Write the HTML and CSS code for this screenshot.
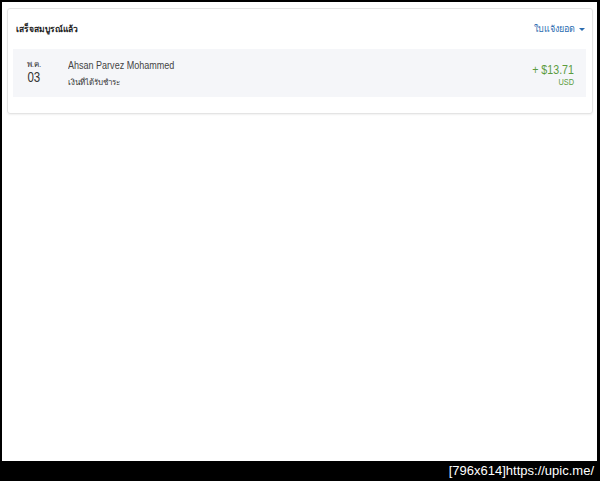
FILE: index.html
```html
<!DOCTYPE html>
<html lang="th">
<head>
  <meta charset="UTF-8">
  <title>Activity</title>
  <link rel="stylesheet" href="styles.css">
</head>
<body>
  <div class="screen">
    <div class="card">
      <div class="card-head">
        <span class="title">เสร็จสมบูรณ์แล้ว</span>
        <span class="statement">ใบแจ้งยอด <span class="caret"></span></span>
      </div>
      <div class="txn">
        <div class="date">
          <span class="month">พ.ค.</span>
          <span class="day narrow">03</span>
        </div>
        <div class="info">
          <span class="name narrow">Ahsan Parvez Mohammed</span>
          <span class="type">เงินที่ได้รับชำระ</span>
        </div>
        <div class="amount">
          <span class="value narrow">+ $13.71</span>
          <span class="currency narrow">USD</span>
        </div>
      </div>
    </div>
  </div>
  <div class="caption">[796x614]https://upic.me/</div>
</body>
</html>
```

FILE: styles.css
```css
body {
  margin: 0;
  background-color: #000;
  font-family: "Liberation Sans", Arial, sans-serif;
  height: 481px;
  overflow: hidden;
}

/* the screenshot's sans is a condensed face */
.narrow {
  display: inline-block;
  transform: scaleX(0.82);
}

.screen {
  background-color: #fff;
  margin: 2px 3px 0 2px;
  height: 459px;
  padding: 6px 4px 0 5px;
  box-sizing: border-box;
}

.card {
  border: 1px solid #e4e4e4;
  border-radius: 3px;
  box-shadow: 0 1px 2px rgba(0, 0, 0, 0.06);
  padding: 0 6px 16px 5px;
}

.card-head {
  display: flex;
  justify-content: space-between;
  align-items: center;
  height: 40px;
  padding: 0 1px 0 3px;
}

.title {
  font-size: 8.5px;
  font-weight: bold;
  color: #222;
}

.statement {
  font-size: 9px;
  color: #2b6cb0;
  display: flex;
  align-items: center;
  gap: 4px;
}

.caret {
  width: 0;
  height: 0;
  border-left: 3px solid transparent;
  border-right: 3px solid transparent;
  border-top: 3px solid #2b6cb0;
}

.txn {
  background-color: #f5f6f9;
  display: flex;
  align-items: center;
  height: 48px;
  padding: 0 12px 0 0;
}

.date {
  width: 42px;
  display: flex;
  flex-direction: column;
  align-items: center;
  color: #333;
  margin-top: -1px;
}

.month {
  font-size: 8px;
  line-height: 10px;
}

.day {
  font-size: 14px;
  line-height: 15px;
}

.info {
  display: flex;
  flex-direction: column;
  align-items: flex-start;
  margin-left: 13px;
  flex: 1;
  margin-top: 2px;
}

.name {
  font-size: 11px;
  color: #444;
  line-height: 15px;
  transform-origin: left center;
}

.type {
  font-size: 8px;
  color: #333;
  line-height: 14px;
  margin-top: 3px;
}

.amount {
  display: flex;
  flex-direction: column;
  align-items: flex-end;
  color: #5b9c3e;
  margin-top: 4px;
}

.value {
  font-size: 13px;
  line-height: 15px;
  transform-origin: right center;
}

.currency {
  font-size: 9px;
  line-height: 11px;
  transform-origin: right center;
}

.caption {
  height: 20px;
  color: #fff;
  font-size: 13px;
  line-height: 20px;
  text-align: right;
  padding-right: 6px;
}
```
